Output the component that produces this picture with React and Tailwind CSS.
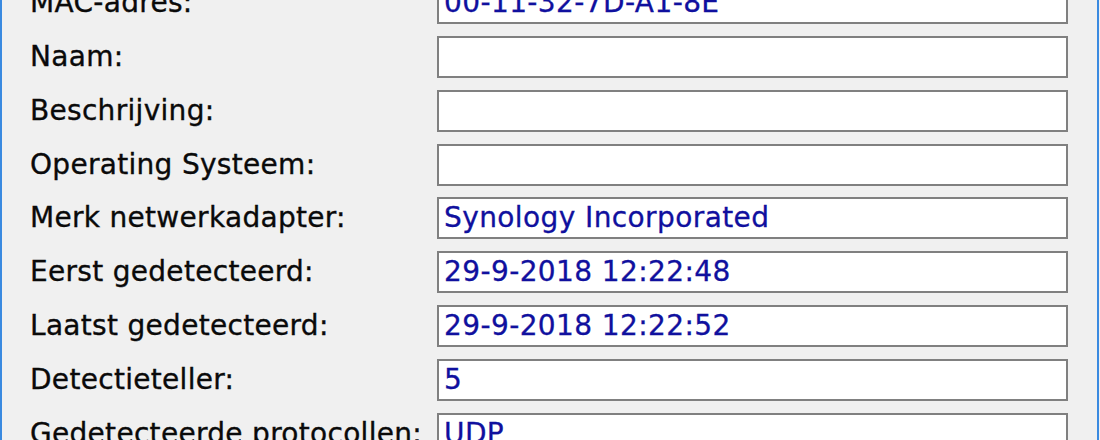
export default function App() {
  const rows = [
    ["MAC-adres:", "00-11-32-7D-A1-8E"],
    ["Naam:", ""],
    ["Beschrijving:", ""],
    ["Operating Systeem:", ""],
    ["Merk netwerkadapter:", "Synology Incorporated"],
    ["Eerst gedetecteerd:", "29-9-2018 12:22:48"],
    ["Laatst gedetecteerd:", "29-9-2018 12:22:52"],
    ["Detectieteller:", "5"],
    ["Gedetecteerde protocollen:", "UDP"],
  ];
  return (
    <div className="w-[1100px] h-[440px] overflow-hidden bg-[#f0f0f0] flex" style={{ fontFamily: '"DejaVu Sans", sans-serif' }}>
      <div className="w-[2px] h-full bg-[#3a8ae0]" />
      <div className="flex-1 h-full overflow-hidden">
        <div className="flex flex-col gap-[11.8px] mt-[-17.8px] pl-[28px] pr-[29px]">
          {rows.map(([label, value]) => (
            <div key={label} className="flex items-center h-[42px]">
              <div className="w-[407px] text-[28px] leading-none tracking-[0.3px] text-[#0a0a0a] [-webkit-text-stroke:0.35px_#0a0a0a] whitespace-nowrap">{label}</div>
              <div className="flex-1 h-[42px] bg-white border-2 border-[#808080] flex items-center pl-[5px]">
                <span className="text-[28px] leading-none tracking-[0.4px] text-[#10109e] [-webkit-text-stroke:0.3px_#10109e] whitespace-nowrap">{value}</span>
              </div>
            </div>
          ))}
        </div>
      </div>
      <div className="w-[2px] h-full bg-[#3a8ae0] mr-[1px]" />
    </div>
  );
}
